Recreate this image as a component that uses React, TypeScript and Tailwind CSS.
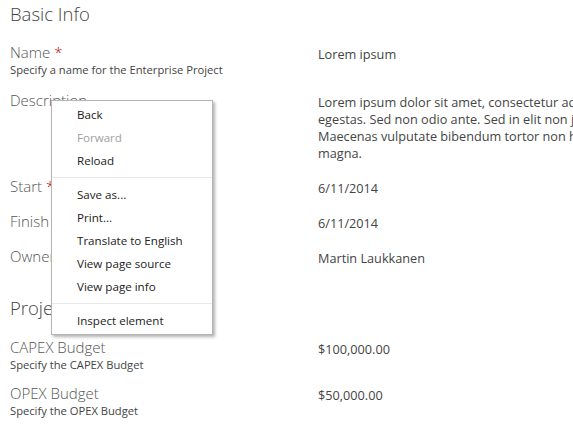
import React from 'react';

const font = { fontFamily: '"Open Sans", "Noto Sans", sans-serif' };

type Field = {
    label: string;
    required?: boolean;
    hint?: string;
    value: string[];
    gap: string;
};

const basicFields: Field[] = [
    { label: 'Name', required: true, hint: 'Specify a name for the Enterprise Project', value: ['Lorem ipsum'], gap: 'mb-[12px]' },
    {
        label: 'Description',
        value: [
            'Lorem ipsum dolor sit amet, consectetur adipiscing elit. Nulla facilisi.',
            'egestas. Sed non odio ante. Sed in elit non justo tincidunt blandit.',
            'Maecenas vulputate bibendum tortor non hendrerit. Etiam quis',
            'magna.',
        ],
        gap: 'mb-[14px]',
    },
    { label: 'Start', required: true, value: ['6/11/2014'], gap: 'mb-[14px]' },
    { label: 'Finish Date', value: ['6/11/2014'], gap: 'mb-[14px]' },
    { label: 'Owner', value: ['Martin Laukkanen'], gap: 'mb-[27px]' },
];

const budgetFields: Field[] = [
    { label: 'CAPEX Budget', hint: 'Specify the CAPEX Budget', value: ['$100,000.00'], gap: 'mb-[10px]' },
    { label: 'OPEX Budget', hint: 'Specify the OPEX Budget', value: ['$50,000.00'], gap: 'mb-0' },
];

const menuGroups = [
    [
        { text: 'Back' },
        { text: 'Forward', disabled: true },
        { text: 'Reload' },
    ],
    [
        { text: 'Save as...' },
        { text: 'Print...' },
        { text: 'Translate to English' },
        { text: 'View page source' },
        { text: 'View page info' },
    ],
    [{ text: 'Inspect element' }],
];

const FieldRow = ({ field }: { field: Field }) => (
    <div className={`flex ${field.gap}`}>
        <div className="w-[308px] shrink-0">
            <div className="text-[15px] leading-[20px] font-light text-[#555]">
                {field.label}
                {field.required && <span className="text-[#bf0000]"> *</span>}
            </div>
            {field.hint && (
                <div className="text-[11.2px] leading-[16px] text-[#444]">{field.hint}</div>
            )}
        </div>
        <div className="pt-[4px] text-[12.7px] leading-[17px] text-[#444] whitespace-nowrap">
            {field.value.map((line, i) => (
                <div key={i}>{line}</div>
            ))}
        </div>
    </div>
);

const ContextMenu = () => (
    <div className="absolute left-[51px] top-[100px] w-[162px] bg-white border border-[#b5b5b5] py-[2px] shadow-[2px_2px_3px_rgba(0,0,0,0.3)]">
        {menuGroups.map((group, gi) => (
            <div key={gi}>
                {gi > 0 && <div className="my-[5px] h-px bg-[#e9e9e9]" />}
                {group.map((item) => (
                    <div
                        key={item.text}
                        className={`pl-[25px] h-[23px] flex items-center text-[11.6px] ${item.disabled ? 'text-[#a0a0a0]' : 'text-[#222]'}`}
                    >
                        {item.text}
                    </div>
                ))}
            </div>
        ))}
    </div>
);

export default function App() {
    return (
        <div className="relative w-[573px] h-[427px] overflow-hidden bg-white px-[10px]" style={font}>
            <h2 className="text-[18.5px] leading-[28px] font-light text-[#444] mb-[14px]">Basic Info</h2>
            {basicFields.map((f) => (
                <FieldRow key={f.label} field={f} />
            ))}
            <h2 className="text-[18.5px] leading-[28px] font-light text-[#444] mb-[15px]">Project Budget</h2>
            {budgetFields.map((f) => (
                <FieldRow key={f.label} field={f} />
            ))}
            <ContextMenu />
        </div>
    );
}
